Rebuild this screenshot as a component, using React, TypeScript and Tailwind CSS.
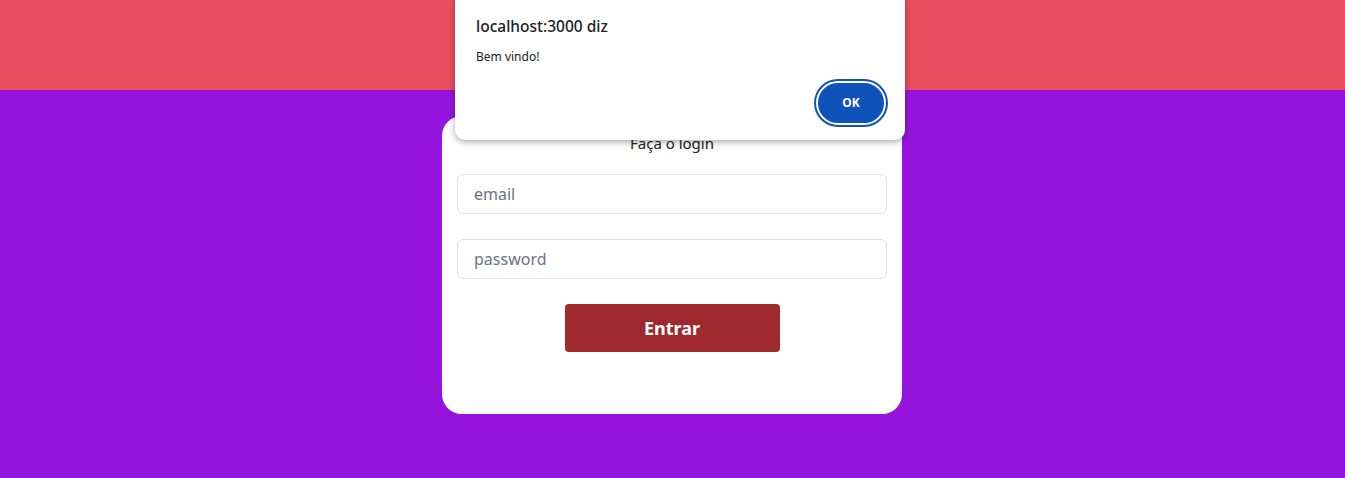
import React from "react";

export default function App() {
  return (
    <div className="relative w-[1345px] h-[478px] overflow-hidden bg-[#9414dc] font-['Noto_Sans',sans-serif]">
      <div className="h-[90px] bg-[#eb4f5f]" />
      <div className="flex justify-center pt-[26px] pr-[1px]">
        <div className="w-[460px] h-[298px] bg-white rounded-[20px] px-[15px] pt-[15px] flex flex-col">
          <div className="text-center text-[15px] leading-[24px] text-[#222]">Faça o login</div>
          <input
            placeholder="email"
            className="mt-[19px] h-[40px] w-full rounded-[6px] border border-[#dde3ee] px-[16px] text-[16px] placeholder:text-[#6b7382] outline-none"
          />
          <input
            placeholder="password"
            className="mt-[25px] h-[40px] w-full rounded-[6px] border border-[#dde3ee] px-[16px] text-[16px] placeholder:text-[#6b7382] outline-none"
          />
          <div className="flex justify-center mt-[25px]">
            <button className="w-[215px] h-[48px] rounded-[4px] bg-[#9f2a2d] text-white text-[18px] font-bold">
              Entrar
            </button>
          </div>
        </div>
      </div>
      <div className="absolute left-[455px] top-[-10px] w-[450px] h-[150px] bg-white rounded-[10px] shadow-[0_2px_6px_rgba(0,0,0,0.35)] px-[21px]">
        <div className="pt-[25px] text-[15.5px] leading-[22px] font-medium text-[#202124]">localhost:3000 diz</div>
        <div className="mt-[12px] text-[12px] leading-[16px] text-[#202124]">Bem vindo!</div>
        <div className="flex justify-end mt-[16px]">
          <button className="w-[70px] h-[44px] rounded-full bg-[#0f52ba] border-[2px] border-white ring-2 ring-[#0f52ba] text-white text-[12px] font-bold -mr-[2px]">
            OK
          </button>
        </div>
      </div>
    </div>
  );
}
